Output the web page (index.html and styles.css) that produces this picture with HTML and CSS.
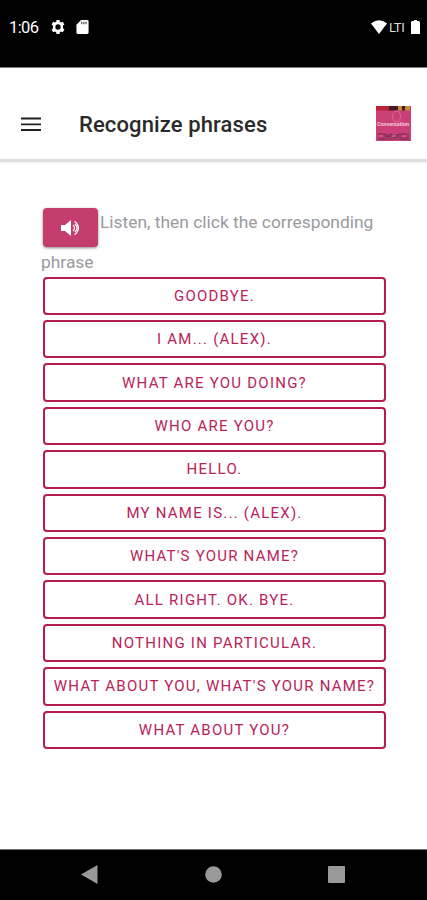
FILE: index.html
```html
<!DOCTYPE html>
<html lang="en">
<head>
<meta charset="utf-8">
<meta name="viewport" content="width=device-width, initial-scale=1">
<title>Recognize phrases</title>
<link rel="stylesheet" href="styles.css">
</head>
<body>
<div class="status">
  <span class="time">1:06</span>
  <svg class="gear" width="16" height="16" viewBox="0 0 24 24"><path fill="#fff" fill-rule="evenodd" d="M9.800 1.500h4.400l.5 2.800 1.800 1 2.700-1 2.400 4-2.200 1.800v3.800l2.200 1.800-2.400 4-2.700-1-1.800 1-.5 2.800H9.800l-.5-2.800-1.800-1-2.700 1-2.400-4 2.200-1.800v-3.800L2.400 8.300l2.400-4 2.700 1 1.800-1zM12 8a4 4 0 1 0 0 8 4 4 0 0 0 0-8z"/></svg>
  <svg class="card" width="13" height="14" viewBox="0 0 13 15"><path fill="#fff" d="M5 0h6.500q1.500 0 1.500 1.500v12q0 1.500-1.500 1.500h-10Q0 15 0 13.500V5z"/><path stroke="#444" stroke-width="1.200" d="M5.700 2v2.500M8 2v2.500M10.300 2v2.500"/></svg>
  <svg class="wifi" width="16" height="14" viewBox="0 0 16 14"><path fill="#fff" d="M0 3.600Q8-3.200 16 3.600L8 14z"/></svg>
  <span class="lte">LTI</span>
  <svg width="9" height="14" viewBox="0 0 9 14"><path fill="#fff" d="M3 0h3v1h2L9 2v12H0V2l1-1h2z"/></svg>
</div>

<div class="header">
  <svg class="menu" width="20" height="14" viewBox="0 0 20 14"><path stroke="#222" stroke-width="1.800" d="M0 1.500h20M0 7.300h20M0 13h20"/></svg>
  <h1>Recognize phrases</h1>
  <svg class="logo" width="35" height="35" viewBox="0 0 35 35">
    <path fill="#c93f76" d="M0 0h35v35H0z"/>
    <path fill="#bd2438" d="M0 0h13v4.500H0z"/>
    <path fill="#4b1820" d="M13 0h9v4.500h-9zM26 0h3v4.500h-3z"/>
    <path fill="#c58b36" d="M22 0h4v4.500h-4zM29 0h5v4.500h-5z"/>
    <ellipse cx="20.500" cy="10.500" rx="4" ry="5.500" fill="none" stroke="#dc6b98"/>
    <text x="1" y="20" class="logo-text" textLength="32">Conversation</text>
    <path fill="#a9386a" d="M2 28h31v6H2z"/>
    <path stroke="#773052" stroke-width="1.200" fill="none" d="M2 28h7l3 3 3-3 4 4 4-4h8M3 33h6M24 33h8"/>
    <path fill="#d4517f" d="M16 29h4v2h-4zM3 29h4v2H3zM26 29h4v2h-4z"/>
  </svg>
</div>

<div class="content">
  <div class="ask"><button class="listen"><svg width="20" height="16" viewBox="0 0 20 16"><path fill="#fff" d="M0 5h4l6-5v16l-6-5H0z"/><path fill="none" stroke="#fff" stroke-width="1.200" d="M12 5q3 3 0 6M13.500 1.200q8 6.800 0 13.600M14 4q4 4 0 8"/></svg></button>Listen, then click the corresponding phrase</div>
  <div class="phrases">
    <button>Goodbye.</button>
    <button>I am... (Alex).</button>
    <button>What are you doing?</button>
    <button>Who are you?</button>
    <button>Hello.</button>
    <button>My name is... (Alex).</button>
    <button>What's your name?</button>
    <button>All right. OK. Bye.</button>
    <button>Nothing in particular.</button>
    <button>What about you, what's your name?</button>
    <button>What about you?</button>
  </div>
</div>

<div class="navbar">
  <svg width="17" height="19" viewBox="0 0 17 19"><path fill="#999" d="M0 9.500L16.500 0v19z"/></svg>
  <svg width="17" height="17" viewBox="0 0 17 17"><circle cx="8.500" cy="8.500" r="8.300" fill="#999"/></svg>
  <svg width="17" height="17" viewBox="0 0 17 17"><rect width="17" height="17" rx="1" fill="#999"/></svg>
</div>
</body>
</html>
```
FILE: styles.css
```css
* {box-sizing: border-box;}
body {
  margin: 0;
  height: 900px;
  display: flex;
  flex-direction: column;
  overflow: hidden;
  background: #fff;
  font-family: Roboto, "Liberation Sans", sans-serif;
}
svg {display: block; flex: none;}

.status {
  display: flex;
  align-items: center;
  height: 68px;
  padding: 0 7px 14px 9px;
  background: #000;
  border-bottom: 1px solid #777;
  color: #fff;
}
.time {width: 41px; font-size: 16.500px; letter-spacing: -.6px; padding-top: 2px;}
.card {margin-left: 10px;}
.wifi {margin-left: auto;}
.lte {width: 17px; margin: 1px 5px 0 2px; font-size: 13px; letter-spacing: -.4px; color: #ddd;}

.header {
  display: flex;
  align-items: center;
  height: 94px;
  padding: 19px 16px 0 21px;
  border-bottom: 3px solid #dedede;
  box-shadow: 0 1px 2px #eee;
}
.menu {margin-top: 1px;}
.header h1 {
  margin: 2px auto 0 38px;
  font-size: 22px;
  font-weight: 500;
  letter-spacing: .12px;
  color: #2a2a2a;
}
.logo-text {font-size: 5.500px; font-weight: bold; fill: #f5c5d8;}

.content {flex: 1; padding: 41px 41px 0;}
.ask {
  font-size: 17.400px;
  line-height: 39.500px;
  color: #999a9e;
}
.listen {
  display: inline-flex;
  align-items: center;
  justify-content: center;
  width: 55px;
  height: 39px;
  margin: 5px 2px -5px;
  padding: 0;
  border: 0;
  border-radius: 4px;
  background: #c53d6c;
  box-shadow: 0 1px 3px #888;
  vertical-align: top;
}

.phrases {
  display: flex;
  flex-direction: column;
  gap: 5px;
  width: 343px;
  margin: -5.400px 0 0 2px;
}
.phrases button {
  height: 38.420px;
  padding: 0;
  border: 2px solid #b51c50;
  border-radius: 4px;
  background: #fff;
  color: #b9235a;
  font: 400 15px Roboto, "Liberation Sans", sans-serif;
  letter-spacing: 1.230px;
  text-transform: uppercase;
  white-space: nowrap;
}

.navbar {
  display: flex;
  align-items: center;
  justify-content: space-between;
  height: 51px;
  padding: 0 82px 2px 81px;
  background: #000;
  border-top: 1px solid #777;
}
```
